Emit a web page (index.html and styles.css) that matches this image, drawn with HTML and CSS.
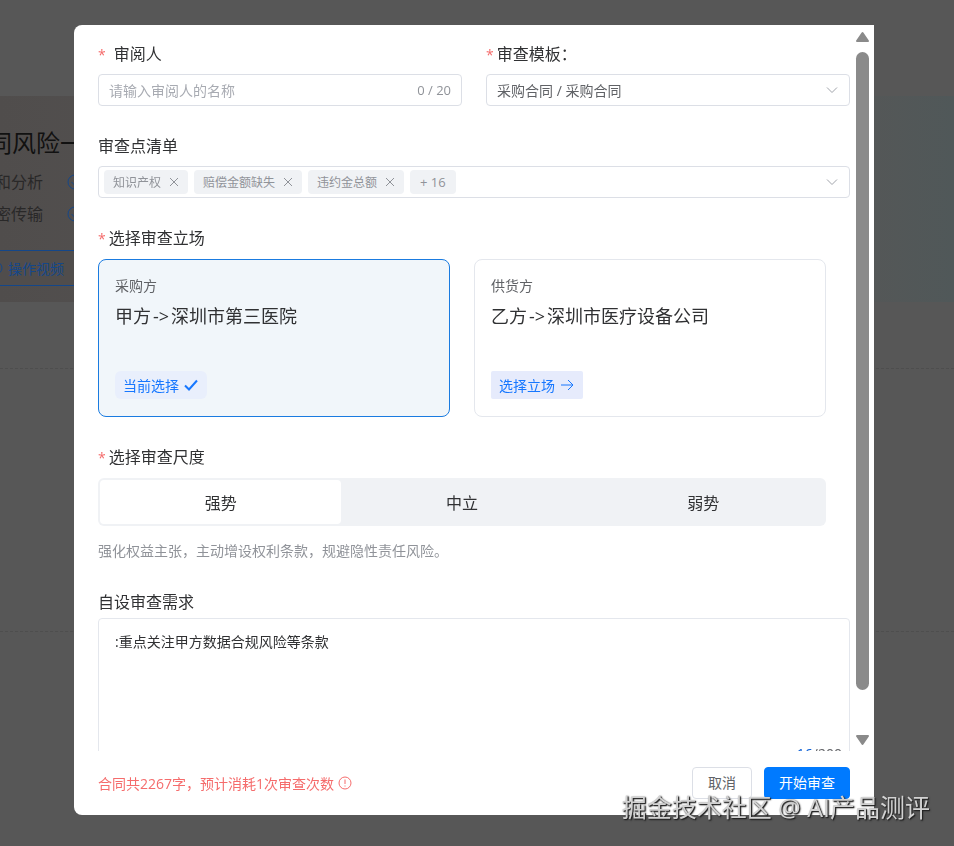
FILE: index.html
```html
<!DOCTYPE html>
<html lang="zh-CN">
<head>
  <meta charset="UTF-8" />
  <meta name="viewport" content="width=device-width, initial-scale=1.0" />
  <title>合同审查</title>
  <link rel="stylesheet" href="styles.css">
</head>
<body>
  <div class="page">
    <div class="hero">
      <h1>同风险一</h1>
      <ul class="features">
        <li>和分析</li>
        <li><svg class="check-circle" viewBox="0 0 16 16"><circle cx="8" cy="8" r="7"/><path d="M4.5 8l2.5 2.5 4.5-5"/></svg></li>
        <li>密传输</li>
        <li><svg class="check-circle" viewBox="0 0 16 16"><circle cx="8" cy="8" r="7"/><path d="M4.5 8l2.5 2.5 4.5-5"/></svg></li>
      </ul>
      <button type="button" class="video-btn">
        <svg viewBox="0 0 14 14"><circle cx="7" cy="7" r="6"/></svg>
        操作视频
      </button>
    </div>
    <div class="band"></div>
    <div class="band tall"></div>
  </div>

  <div class="overlay">
    <form class="modal">
      <div class="modal-body">
        <div class="scroll-area">
          <div class="row">
            <div class="field">
              <label class="title required wide" for="reviewer">审阅人</label>
              <div class="control">
                <input type="text" id="reviewer" maxlength="20" placeholder="请输入审阅人的名称">
                <span class="count">0 / 20</span>
              </div>
            </div>
            <div class="field">
              <label class="title required" for="template">审查模板：</label>
              <div class="control">
                <select id="template">
                  <option>采购合同 / 采购合同</option>
                </select>
                <svg class="arrow" viewBox="0 0 12 12"><path d="M1 3.5l5 5 5-5"/></svg>
              </div>
            </div>
          </div>

          <div class="field">
            <div class="title">审查点清单</div>
            <div class="control tags">
              <span class="tag">知识产权<button type="button" aria-label="移除知识产权"><svg viewBox="0 0 10 10"><path d="M1 1l8 8M9 1l-8 8"/></svg></button></span>
              <span class="tag">赔偿金额缺失<button type="button" aria-label="移除赔偿金额缺失"><svg viewBox="0 0 10 10"><path d="M1 1l8 8M9 1l-8 8"/></svg></button></span>
              <span class="tag">违约金总额<button type="button" aria-label="移除违约金总额"><svg viewBox="0 0 10 10"><path d="M1 1l8 8M9 1l-8 8"/></svg></button></span>
              <span class="tag more">+ 16</span>
              <svg class="arrow" viewBox="0 0 12 12"><path d="M1 3.5l5 5 5-5"/></svg>
            </div>
          </div>

          <div class="field inset">
            <div class="title required">选择审查立场</div>
            <div class="cards">
              <div class="card active">
                <div class="role">采购方</div>
                <div class="party">甲方<span class="to">-&gt;</span>深圳市第三医院</div>
                <button type="button" class="pick">
                  当前选择
                  <svg class="bold" viewBox="0 0 16 16"><path d="M2 8.5l4 4 8-9"/></svg>
                </button>
              </div>
              <div class="card">
                <div class="role">供货方</div>
                <div class="party">乙方<span class="to">-&gt;</span>深圳市医疗设备公司</div>
                <button type="button" class="pick">
                  选择立场
                  <svg viewBox="0 0 16 16"><path d="M2 8h12M9 3l5 5-5 5"/></svg>
                </button>
              </div>
            </div>
          </div>

          <div class="field inset">
            <div class="title required">选择审查尺度</div>
            <div class="segmented">
              <label><input type="radio" name="scale" checked>强势</label>
              <label><input type="radio" name="scale">中立</label>
              <label><input type="radio" name="scale">弱势</label>
            </div>
            <p class="hint">强化权益主张，主动增设权利条款，规避隐性责任风险。</p>
          </div>

          <div class="field demand">
            <label class="title" for="demand">自设审查需求</label>
            <div class="textarea-wrap">
              <textarea id="demand" maxlength="200">:重点关注甲方数据合规风险等条款</textarea>
              <span class="demand-count"><b>16</b>/200</span>
            </div>
          </div>
        </div>
        <div class="scrollbar">
          <svg viewBox="0 0 15 12"><path d="M7.5 2L13 10H2z"/></svg>
          <div class="thumb"></div>
          <svg class="down" viewBox="0 0 15 12"><path d="M7.5 2L13 10H2z"/></svg>
        </div>
      </div>

      <div class="modal-footer">
        <p class="cost">
          合同共2267字，预计消耗1次审查次数
          <svg viewBox="0 0 14 14"><circle cx="7" cy="7" r="6"/><path d="M7 3.5v4.5M7 9.5v1"/></svg>
        </p>
        <button type="button" class="btn">取消</button>
        <button type="submit" class="btn primary">开始审查</button>
      </div>
    </form>
  </div>

  <div class="watermark">掘金技术社区 @ AI产品测评</div>
</body>
</html>
```

FILE: styles.css
```css
* {
  box-sizing: border-box;
}
body {
  margin: 0;
  height: 100vh;
  overflow: hidden;
  background: #575757;
  color: #303133;
  font-family: "Open Sans", "Noto Sans CJK SC", sans-serif;
  font-size: 14px;
}
button, input, select, textarea {
  font: inherit;
  color: inherit;
}
h1, p, ul {
  margin: 0;
  padding: 0;
}
svg {
  fill: none;
  stroke: currentColor;
  flex: none;
}

/* page behind the dialog */
.page {
  padding-top: 96px;
}
.hero {
  height: 206px;
  padding-top: 30px;
  background: linear-gradient(90deg, #504d4c, #575656 50%, #555757 90%, #505859);
}
.hero h1 {
  margin-left: -12px;
  font-size: 24px;
  line-height: 34px;
  font-weight: 400;
  color: #111;
}
.features {
  display: grid;
  grid-template-columns: 48px 16px;
  column-gap: 24px;
  margin: 6px 0 0 -5px;
  list-style: none;
  font-size: 16px;
  line-height: 32px;
  color: #292828;
}
.features li {
  display: flex;
  align-items: center;
}
.check-circle {
  width: 16px;
  height: 16px;
  color: #14478a;
}
.video-btn {
  display: flex;
  align-items: center;
  gap: 5px;
  width: 120px;
  height: 36px;
  margin: 20px 0 0 -24px;
  padding: 0 12px;
  border: 1px solid #14478a;
  background: #504d4c;
  color: #14478a;
}
.video-btn svg {
  width: 14px;
  height: 14px;
}
.band {
  height: 67px;
  border-bottom: 1px dashed #4e4e4e;
}
.band.tall {
  height: 263px;
}

/* dialog */
.overlay {
  position: fixed;
  inset: 0;
  display: flex;
  padding: 25px 80px 31px 74px;
}
.modal {
  display: flex;
  flex-direction: column;
  flex: 1;
  min-width: 0;
  background: #fff;
  border-radius: 8px 0 0 8px;
}
.modal-body {
  display: flex;
  flex: 1;
  min-height: 0;
}
.scroll-area {
  flex: 1;
  min-width: 0;
  padding: 17px 0 0 24px;
  overflow-y: auto;
  scrollbar-width: none;
}
.scrollbar {
  display: flex;
  flex-direction: column;
  align-items: center;
  width: 24px;
  padding: 6px 0 5px;
}
.scrollbar svg {
  width: 15px;
  height: 12px;
  fill: #8a8a8a;
  stroke: #8a8a8a;
  stroke-width: 2;
  stroke-linejoin: round;
}
.scrollbar .down {
  transform: rotate(180deg);
}
.thumb {
  flex: 1;
  width: 13px;
  margin: 9px 0 44px;
  border-radius: 7px;
  background: #8a8a8a;
}

.row {
  display: flex;
  gap: 24px;
}
.field {
  flex: 1;
  margin-bottom: 28px;
}
.inset {
  padding-right: 24px;
}
.title {
  display: block;
  margin-bottom: 8px;
  font-size: 16px;
  line-height: 24px;
}
.inset .title {
  margin-bottom: 9px;
}
.required::before {
  content: "*";
  margin-right: 3px;
  font-size: 14px;
  line-height: 1;
  color: #f56c6c;
}
.required.wide::before {
  margin-right: 8px;
}
.control {
  display: flex;
  align-items: center;
  height: 32px;
  padding: 0 10px;
  border: 1px solid #dcdfe6;
  border-radius: 4px;
}
.control input,
.control select {
  flex: 1;
  min-width: 0;
  height: 30px;
  padding: 0;
  border: none;
  outline: none;
  background: none;
  appearance: none;
  color: #606266;
}
.control input::placeholder {
  color: #a8abb2;
}
.count {
  font-size: 13px;
  color: #909399;
}
.arrow {
  width: 12px;
  height: 12px;
  margin: 0 1px 0 auto;
  color: #a0a3aa;
}

.tags {
  gap: 6px;
  padding-left: 5px;
}
.tag {
  display: flex;
  align-items: center;
  gap: 8px;
  height: 24px;
  padding: 0 9px;
  border-radius: 4px;
  background: #f0f2f5;
  color: #909399;
  font-size: 12px;
}
.tag.more {
  padding: 0 10px;
  font-size: 13px;
}
.tag button {
  display: flex;
  padding: 0;
  border: none;
  background: none;
  cursor: pointer;
}
.tag svg {
  width: 10px;
  height: 10px;
}

.cards {
  display: grid;
  grid-template-columns: 1fr 1fr;
  gap: 24px;
}
.card {
  display: flex;
  flex-direction: column;
  align-items: flex-start;
  height: 158px;
  padding: 16px 16px 17px;
  border: 1px solid #e4e7ed;
  border-radius: 8px;
}
.card.active {
  border-color: #1a7be0;
  background: #f1f6fa;
}
.role {
  line-height: 20px;
  color: #606266;
}
.party {
  margin-top: 6px;
  font-size: 18px;
  line-height: 28px;
}
.to {
  margin: 0 2px;
}
.pick {
  display: flex;
  align-items: center;
  gap: 4px;
  height: 28px;
  margin-top: auto;
  padding: 0 8px;
  border: none;
  border-radius: 2px;
  background: #e6ebfc;
  color: #1677ff;
  cursor: pointer;
}
.active .pick {
  border-radius: 6px;
  background: #e9effc;
}
.pick svg {
  width: 16px;
  height: 16px;
}
.pick .bold {
  stroke-width: 2;
}

.segmented {
  display: grid;
  grid-template-columns: repeat(3, 1fr);
  height: 48px;
  padding: 2px;
  border-radius: 6px;
  background: #f0f2f5;
}
.segmented label {
  display: flex;
  align-items: center;
  justify-content: center;
  border-radius: 4px;
  font-size: 16px;
  cursor: pointer;
}
.segmented label:has(:checked) {
  background: #fff;
}
.segmented input {
  appearance: none;
  width: 0;
  margin: 0;
}
.hint {
  margin-top: 14px;
  line-height: 22px;
  color: #909399;
}

.demand .title {
  margin-bottom: 4px;
}
.textarea-wrap {
  position: relative;
}
.textarea-wrap textarea {
  display: block;
  width: 100%;
  height: 150px;
  padding: 12px 16px;
  border: 1px solid #e4e7ed;
  border-radius: 4px;
  outline: none;
  resize: none;
  line-height: 22px;
}
.demand-count {
  position: absolute;
  right: 8px;
  bottom: 4px;
  font-size: 14px;
  line-height: 20px;
  color: #606266;
}
.demand-count b {
  font-weight: 400;
  color: #0b5fd6;
}

.modal-footer {
  display: flex;
  align-items: center;
  height: 64px;
  padding: 0 24px;
}
.cost {
  display: flex;
  align-items: center;
  gap: 4px;
  margin-right: auto;
  color: #f56c6c;
}
.cost svg {
  width: 14px;
  height: 14px;
}
.btn {
  height: 32px;
  padding: 0 15px;
  border: 1px solid #dcdfe6;
  border-radius: 4px;
  background: #fff;
  color: #606266;
  line-height: 20px;
  cursor: pointer;
}
.btn.primary {
  margin-left: 12px;
  padding: 0 14px;
  border-color: #007aff;
  background: #007aff;
  color: #fff;
}

.watermark {
  position: fixed;
  right: 24px;
  bottom: 21px;
  font-size: 25px;
  line-height: 36px;
  color: #d2d2d2;
  text-shadow: 1px 1px 1px #222, 1px 1px 2px #333;
  pointer-events: none;
}
```
